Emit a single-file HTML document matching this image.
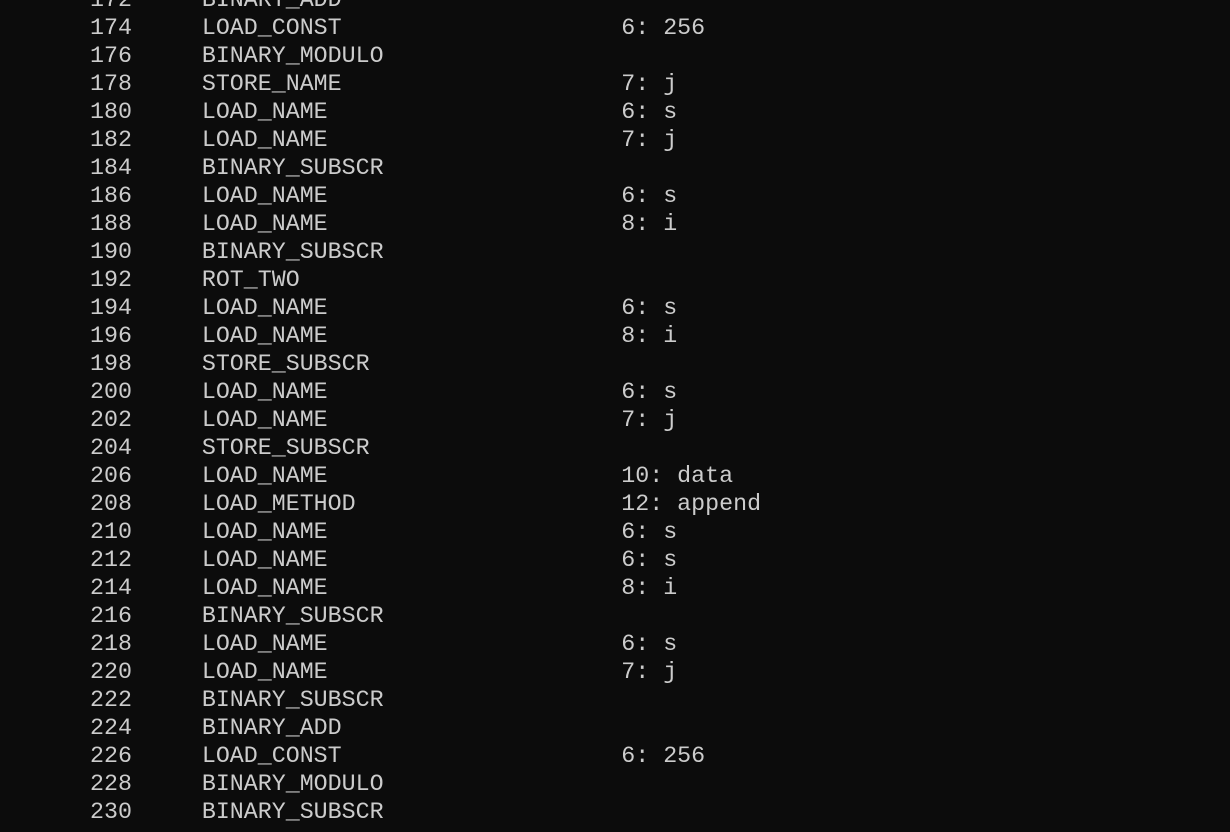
<!DOCTYPE html>
<html><head><style>
html,body{margin:0;padding:0;background:#0c0c0c;width:1230px;height:832px;overflow:hidden}
pre{position:absolute;left:90px;top:-14px;margin:0;font-family:"Liberation Mono",monospace;font-size:23.3px;line-height:28px;color:#cccccc}
</style></head><body><pre>172     BINARY_ADD
174     LOAD_CONST                    6: 256
176     BINARY_MODULO
178     STORE_NAME                    7: j
180     LOAD_NAME                     6: s
182     LOAD_NAME                     7: j
184     BINARY_SUBSCR
186     LOAD_NAME                     6: s
188     LOAD_NAME                     8: i
190     BINARY_SUBSCR
192     ROT_TWO
194     LOAD_NAME                     6: s
196     LOAD_NAME                     8: i
198     STORE_SUBSCR
200     LOAD_NAME                     6: s
202     LOAD_NAME                     7: j
204     STORE_SUBSCR
206     LOAD_NAME                     10: data
208     LOAD_METHOD                   12: append
210     LOAD_NAME                     6: s
212     LOAD_NAME                     6: s
214     LOAD_NAME                     8: i
216     BINARY_SUBSCR
218     LOAD_NAME                     6: s
220     LOAD_NAME                     7: j
222     BINARY_SUBSCR
224     BINARY_ADD
226     LOAD_CONST                    6: 256
228     BINARY_MODULO
230     BINARY_SUBSCR
</pre></body></html>
